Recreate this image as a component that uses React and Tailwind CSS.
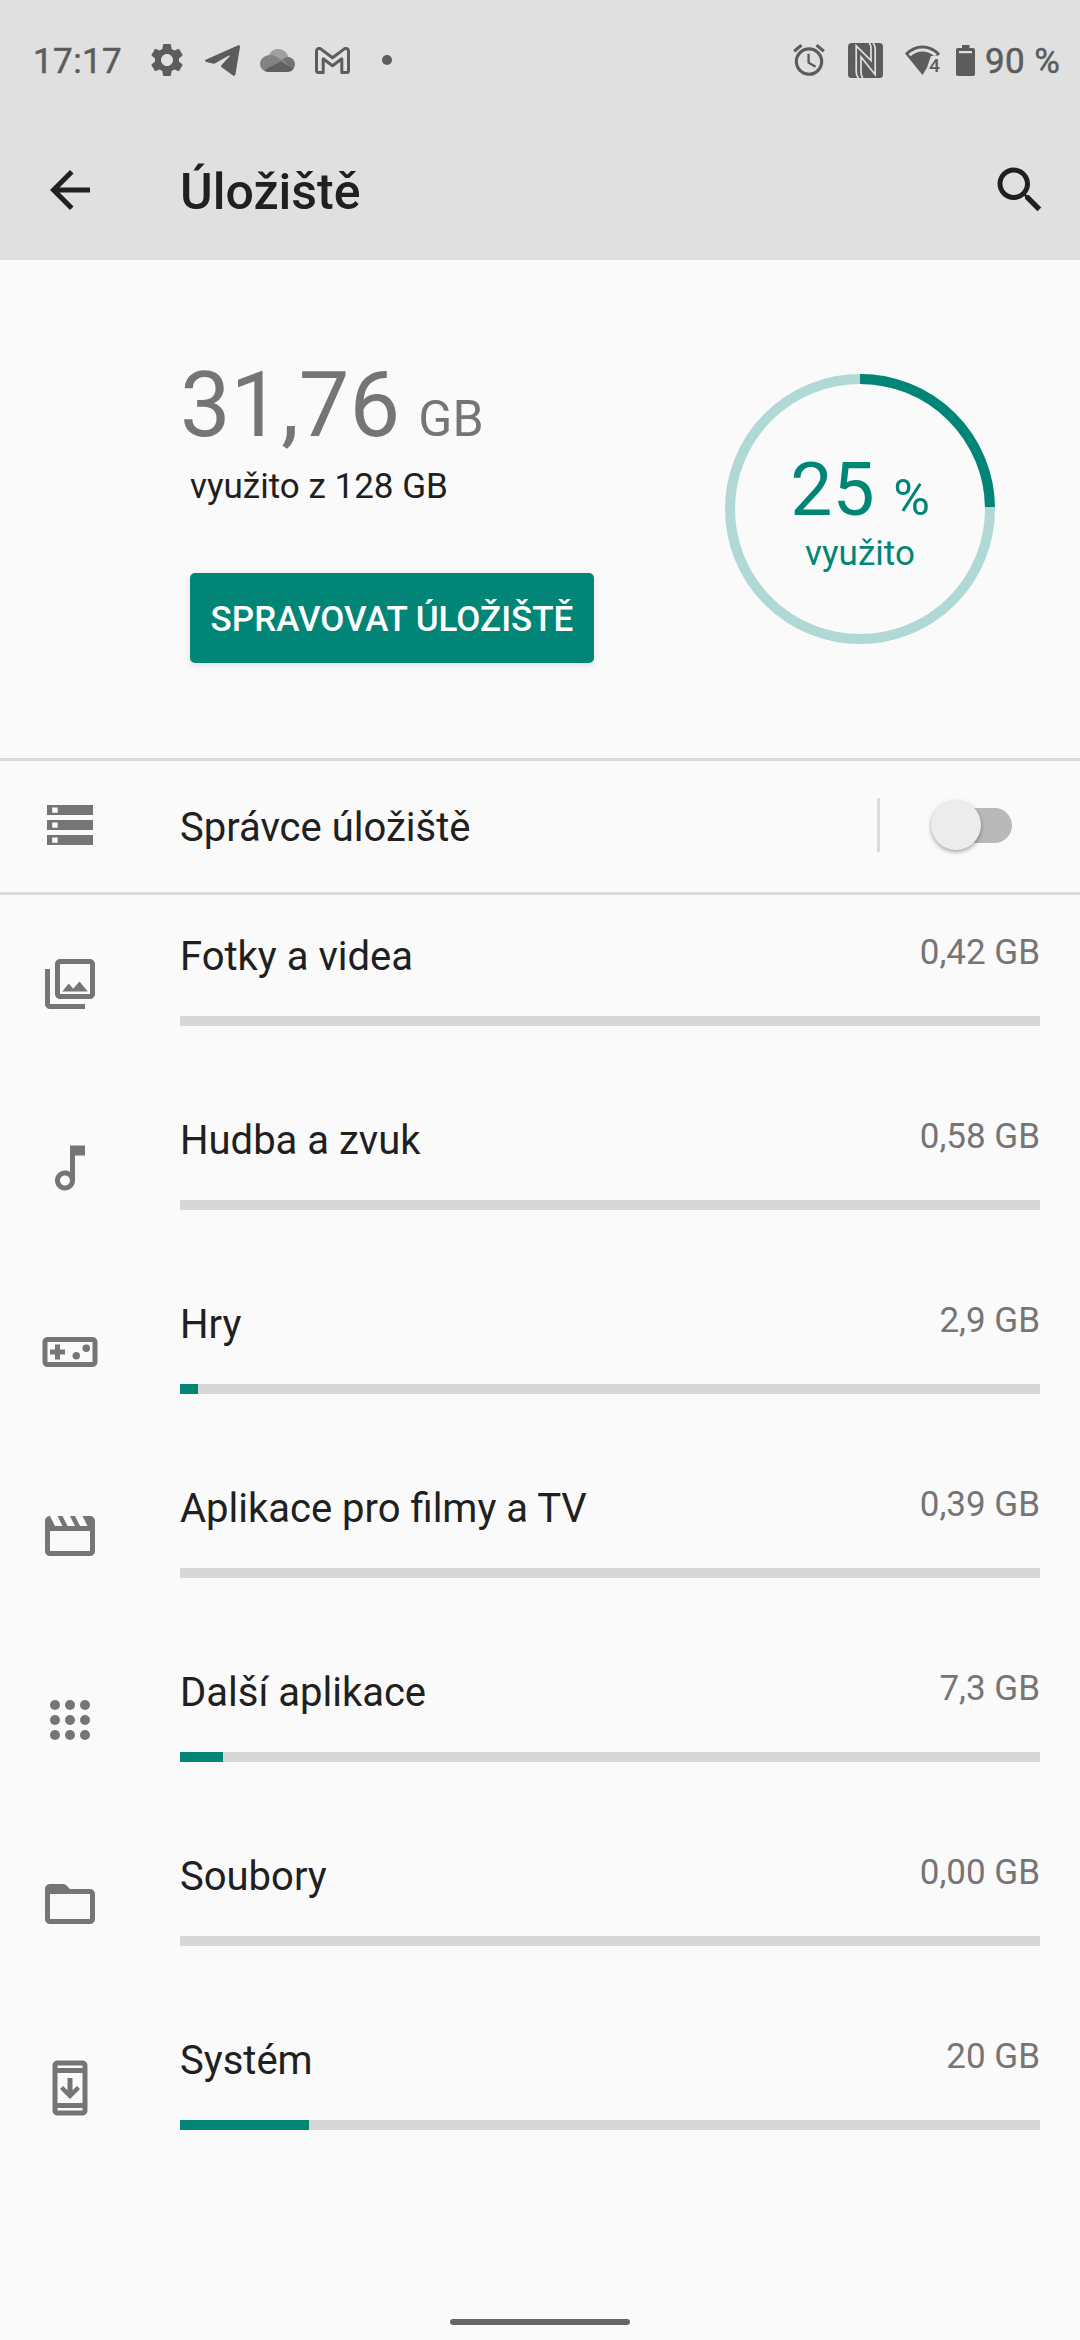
import React from "react";
import { MdSettings, MdAccessAlarm } from "react-icons/md";

function Icon({ children, className = "" }) {
  return (
    <svg viewBox="0 0 24 24" fill="currentColor" className={`h-[60px] w-[60px] ${className}`}>
      {children}
    </svg>
  );
}

const PhotosIcon = () => (
  <Icon>
    <path fillRule="evenodd" d="M20 2H8C6.9 2 6 2.9 6 4v12c0 1.100.9 2 2 2h12c1.100 0 2-.9 2-2V4c0-1.100-.9-2-2-2zM8 4h12v12H8z" />
    <path d="M2 6h2v14h14v2H4c-1.100 0-2-.9-2-2zM8.900 15l2.600-3.200 1.800 2.100 2.500-2.900 3.300 4z" />
  </Icon>
);

const MusicIcon = () => (
  <Icon>
    <path d="M12 3v10.550c-.59-.34-1.270-.55-2-.55-2.210 0-4 1.790-4 4s1.790 4 4 4 4-1.790 4-4V7h4V3zM10 19c-1.100 0-2-.9-2-2s.9-2 2-2 2 .9 2 2-.9 2-2 2z" />
  </Icon>
);

const GamesIcon = () => (
  <Icon>
    <path d="M21 6H3c-1.100 0-2 .9-2 2v8c0 1.100.9 2 2 2h18c1.100 0 2-.9 2-2V8c0-1.100-.9-2-2-2zm0 10H3V8h18zM6 15h2v-2h2v-2H8V9H6v2H4v2h2z" />
    <circle cx="14.5" cy="13.5" r="1.500" />
    <circle cx="18.500" cy="10.500" r="1.500" />
  </Icon>
);

const MoviesIcon = () => (
  <Icon>
    <path fillRule="evenodd" d="M4 4l2 4h3L7 4h2l2 4h3l-2-4h2l2 4h3l-2-4h3c1.100 0 2 .9 2 2v12c0 1.100-.9 2-2 2H4c-1.100 0-2-.9-2-2V6c0-1.100.9-2 2-2zM4 10v8h16v-8z" />
  </Icon>
);

const AppsIcon = () => (
  <Icon>
    {[6, 12, 18].map((y) => [6, 12, 18].map((x) => <circle key={`${x}-${y}`} cx={x} cy={y} r="2" />))}
  </Icon>
);

const FilesIcon = () => (
  <Icon>
    <path d="M20 6h-8l-1.400-1.400c-.4-.4-.9-.6-1.400-.6H4c-1.100 0-2 .9-2 2v12c0 1.100.9 2 2 2h16c1.100 0 2-.9 2-2V8c0-1.100-.9-2-2-2zm0 12H4V8h16z" />
  </Icon>
);

const SystemIcon = () => (
  <Icon>
    <path d="M17 1H7c-1.100 0-2 .9-2 2v18c0 1.100.9 2 2 2h10c1.100 0 2-.9 2-2V3c0-1.100-.9-2-2-2zm0 20H7v-1h10zm0-3H7V6h10zm0-14H7V3h10z" />
    <path d="M16 12.400l-1.200-1.200L13 12.900V8h-2v4.900l-1.800-1.700L8 12.400l4 4z" />
  </Icon>
);

const StorageIcon = () => (
  <svg viewBox="0 0 60 60" fill="#757575" className="h-[60px] w-[60px]">
    {[10, 25, 40].map((y) => (
      <path key={y} fillRule="evenodd" d={`M7 ${y}h46v10H7zM12.200 ${y + 2.500}v5.200h5.500v-5.200z`} />
    ))}
  </svg>
);

const TelegramIcon = () => (
  <svg viewBox="0 0 35 31" fill="currentColor" className="h-[31px] w-[35px]">
    <path d="M33.300.3C34.400-.1 35.200.5 35 2l-4.500 27c-.3 1.800-1.400 2.300-2.900 1.300L17 22.600c-1.200-.9-1.200-1.800-.2-2.800l7.600-8.300c.6-.8-.1-1.200-1-.7L10.800 18c-1 .6-2 .8-3.100.5L1.300 16.900C-.3 16.400-.4 15.300 1.200 14.500z" />
  </svg>
);

const CloudIcon = () => (
  <svg viewBox="0 0 35 23" className="h-[23px] w-[35px]">
    <path d="M8 7.500C10.500 1.500 15 0 18.500 0c4.500 0 8.500 3 9.800 8L18 14z" fill="#a0a0a0" />
    <path d="M9 6.200c2.500-.4 5 .3 7.500 1.800l7 4.200L3.500 21.300C1.300 20 0 17.500 0 15c0-4.700 4-8.600 9-8.800z" fill="#828282" />
    <path d="M22 11.500c1.500-2.500 4-3.800 6.300-3.500 3.800.3 6.700 3.500 6.700 7.300 0 1.800-.7 3.500-2 4.800z" fill="#737373" />
    <path d="M3.500 21.200L21.500 12l12 7.800c-1.500 2.200-3.500 3.200-6 3.200H9c-2 0-4-.5-5.500-1.800z" fill="#606060" />
  </svg>
);

const GmailIcon = () => (
  <svg viewBox="0 0 35 27" className="h-[27px] w-[35px]" fill="none" stroke="currentColor" strokeWidth="3" strokeLinejoin="round">
    <path d="M1.500 4.200C1.500 1.600 4.200.7 6 2.100l11.500 8.700L29 2.100c1.800-1.400 4.500-.5 4.500 2.100v19.600c0 1-.7 1.700-1.700 1.700h-5V11.800L17.500 18.700l-9.300-6.900v13.700h-5c-1 0-1.700-.7-1.700-1.700z" />
  </svg>
);

const NfcIcon = () => (
  <svg viewBox="0 0 35 35" className="h-[35px] w-[35px]">
    <rect width="35" height="35" rx="3.500" fill="#5c5c5c" />
    <path d="M10.500 35C8.800 33.500 8.200 31.500 8.200 28.500V2.800L23 17.500V6c0-3-.6-4.800-1.800-6M25 0c1.600 1.500 2.200 3.500 2.200 6.500v25.200L13 14v15c0 3 .6 4.800 1.800 6" fill="none" stroke="#e0e0e0" strokeWidth="1.700" />
  </svg>
);

const WifiIcon = () => (
  <svg viewBox="0 0 35 31" className="h-[31px] w-[35px] overflow-visible">
    <path d="M0 8.500C9.500-2.300 25.500-2.300 35 8.500l-1.500 2h-4L17.500 30z" fill="#5c5c5c" />
    <path d="M4.500 10.200c7.500-7 18.500-7 26 0" fill="none" stroke="#e0e0e0" strokeWidth="3" />
    <path d="M26 11h10v16H22.500v-6z" fill="#e0e0e0" />
    <text x="24" y="26.500" fontFamily="Roboto, sans-serif" fontSize="19" fontWeight="500" textLength="11" lengthAdjust="spacingAndGlyphs" fill="#5c5c5c">4</text>
  </svg>
);

const BatteryIcon = () => (
  <svg viewBox="0 0 19 31" className="h-[31px] w-[19px]">
    <path d="M6 0h7.500v3H17c1.300 0 2 .7 2 2v24c0 1.300-.7 2-2 2H2c-1.300 0-2-.7-2-2V5c0-1.300.7-2 2-2h4z" fill="#5c5c5c" />
    <rect x="3" y="6" width="13" height="2.200" fill="#e0e0e0" />
  </svg>
);

const categories = [
  { name: "Fotky a videa", size: "0,42 GB", fill: 0, Glyph: PhotosIcon },
  { name: "Hudba a zvuk", size: "0,58 GB", fill: 0, Glyph: MusicIcon },
  { name: "Hry", size: "2,9 GB", fill: 18, Glyph: GamesIcon },
  { name: "Aplikace pro filmy a TV", size: "0,39 GB", fill: 0, Glyph: MoviesIcon },
  { name: "Další aplikace", size: "7,3 GB", fill: 43, Glyph: AppsIcon },
  { name: "Soubory", size: "0,00 GB", fill: 0, Glyph: FilesIcon },
  { name: "Systém", size: "20 GB", fill: 129, Glyph: SystemIcon },
];

function StatusBar() {
  return (
    <div className="flex h-[120px] items-center pl-[33px] pr-[21px] text-[35px] text-[#5c5c5c]">
      <span className="w-[114px] pt-[2px] leading-none tracking-[0.4px] [-webkit-text-stroke:0.5px_#5c5c5c]">17:17</span>
      <MdSettings className="h-[40px] w-[40px]" />
      <span className="ml-[18px]"><TelegramIcon /></span>
      <span className="ml-[20px]"><CloudIcon /></span>
      <span className="ml-[20px]"><GmailIcon /></span>
      <span className="ml-[32px] h-[10px] w-[10px] rounded-full bg-[#5c5c5c]" />
      <span className="flex-1" />
      <MdAccessAlarm className="h-[38px] w-[38px]" />
      <span className="ml-[20px]"><NfcIcon /></span>
      <span className="ml-[22px]"><WifiIcon /></span>
      <span className="ml-[16px]"><BatteryIcon /></span>
      <span className="ml-[10px] w-[74px] whitespace-nowrap pt-[2px] leading-none tracking-[0.4px] [-webkit-text-stroke:0.5px_#5c5c5c]">90 %</span>
    </div>
  );
}

function Toolbar() {
  return (
    <div className="flex h-[140px] items-center pl-[40px] pr-[30px] text-[#202020]">
      <svg viewBox="0 0 24 24" fill="currentColor" className="h-[60px] w-[60px]">
        <path d="M20 11H7.830l5.590-5.590L12 4l-8 8 8 8 1.410-1.410L7.830 13H20v-2z" />
      </svg>
      <h1 className="ml-[80px] flex-1 pt-[4px] text-[50px] font-medium leading-[60px]">Úložiště</h1>
      <svg viewBox="0 0 24 24" fill="currentColor" className="h-[60px] w-[60px]">
        <path d="M15.500 14h-.79l-.28-.27C15.410 12.590 16 11.110 16 9.500 16 5.910 13.090 3 9.500 3S3 5.910 3 9.500 5.910 16 9.500 16c1.610 0 3.090-.59 4.230-1.570l.27.28v.79l5 4.990L20.490 19l-4.990-5zm-6 0C7.010 14 5 11.990 5 9.500S7.010 5 9.500 5 14 7.010 14 9.500 11.990 14 9.500 14z" />
      </svg>
    </div>
  );
}

function Summary() {
  return (
    <section className="flex h-[498px] pl-[180px] pr-[85px]">
      <div className="flex flex-1 flex-col items-start pt-[96px]">
        <p className="whitespace-nowrap text-[90px] leading-[100px] text-[#757575]">
          31,76 <span className="ml-[-4px] text-[50px] leading-none">GB</span>
        </p>
        <p className="ml-[10px] mt-[11px] text-[35px] leading-[40px] text-[#202020]">využito z 128 GB</p>
        <button className="ml-[10px] mt-[66px] h-[90px] w-[404px] rounded-[5px] bg-[#008577] pt-[4px] text-[35px] font-medium leading-[40px] whitespace-nowrap text-white shadow-[0_2px_6px_rgba(0,80,70,0.14)]">
          SPRAVOVAT ÚLOŽIŠTĚ
        </button>
      </div>
      <div className="mt-[114px] grid h-[270px] w-[270px]">
        <svg viewBox="0 0 270 270" className="col-start-1 row-start-1" fill="none" strokeWidth="10">
          <circle cx="135" cy="135" r="130" stroke="#b0d8d4" />
          <path d="M135 5A130 130 0 0 1 264.980 133" stroke="#008577" />
        </svg>
        <div className="col-start-1 row-start-1 flex flex-col items-center pt-[70px] text-[#008577]">
          <p className="whitespace-nowrap text-[75px] leading-[90px]">
            25 <span className="text-[50px] leading-none">%</span>
          </p>
          <p className="text-[35px] leading-[40px]">využito</p>
        </div>
      </div>
    </section>
  );
}

function ManagerRow() {
  return (
    <section className="flex h-[137px] items-center border-y-[3px] border-[#dadbdf] pb-[3px] pl-[40px] pr-[68px]">
      <StorageIcon />
      <p className="ml-[80px] flex-1 pt-[6px] text-[40px] leading-[50px] text-[#202020]">Správce úložiště</p>
      <span className="h-[54px] w-[3px] bg-[#dadbdf]" />
      <span className="ml-[51px] flex h-[50px] w-[81px] items-center">
        <span className="z-10 h-[50px] w-[50px] shrink-0 rounded-full bg-[#ececec] shadow-[0_2px_4px_rgba(0,0,0,0.35)]" />
        <span className="-ml-[36px] h-[35px] w-[67px] shrink-0 rounded-full bg-[#b9b9b9]" />
      </span>
    </section>
  );
}

function CategoryRow({ name, size, fill, Glyph }) {
  return (
    <li className="flex h-[184px] pl-[40px] pr-[40px] pt-[31px]">
      <span className="pt-[28px] text-[#757575]"><Glyph /></span>
      <div className="ml-[80px] flex-1">
        <div className="flex h-[60px] justify-between">
          <span className="text-[40px] leading-[62px] text-[#202020]">{name}</span>
          <span className="text-[35px] leading-[54px] text-[#757575]">{size}</span>
        </div>
        <div className="mt-[30px] h-[10px] bg-[#d7d7d7]">
          <div className="h-full bg-[#008577]" style={{ width: fill }} />
        </div>
      </div>
    </li>
  );
}

export default function App() {
  return (
    <div className="flex h-[2340px] w-[1080px] flex-col overflow-hidden bg-[#fafafa] font-[Roboto,sans-serif]">
      <header className="h-[260px] bg-[#e0e0e0]">
        <StatusBar />
        <Toolbar />
      </header>
      <Summary />
      <ManagerRow />
      <ul>
        {categories.map((c) => (
          <CategoryRow key={c.name} {...c} />
        ))}
      </ul>
      <div className="mx-auto mb-[15px] mt-auto h-[6px] w-[180px] rounded-full bg-[#666666]" />
    </div>
  );
}
